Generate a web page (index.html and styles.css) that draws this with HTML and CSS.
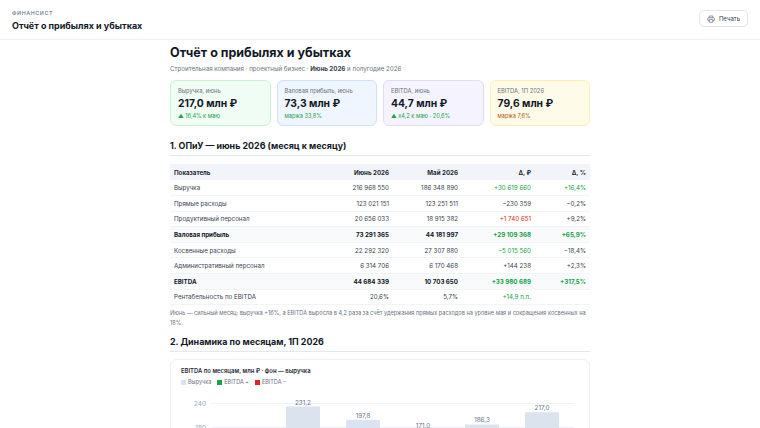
FILE: index.html
```html
<!DOCTYPE html>
<html lang="ru">
<head>
<meta charset="utf-8">
<title>Отчёт о прибылях и убытках</title>
<link rel="stylesheet" href="styles.css">
</head>
<body>
<header class="topbar">
  <div class="brand">
    <div class="brand-kicker">ФИНАНСИСТ</div>
    <div class="brand-title">Отчёт о прибылях и убытках</div>
  </div>
  <button class="print-btn" type="button">
    <svg class="print-icon" viewBox="0 0 16 16" width="8" height="8" aria-hidden="true">
      <path d="M4.5 5.5V2h7v3.5" fill="none" stroke="#6b7280" stroke-width="1.5" stroke-linejoin="round"/>
      <rect x="1.5" y="5.5" width="13" height="6" rx="1.5" fill="none" stroke="#6b7280" stroke-width="1.5"/>
      <rect x="4.5" y="9" width="7" height="5.5" rx="0.5" fill="#fff" stroke="#6b7280" stroke-width="1.5"/>
    </svg>
    <span>Печать</span>
  </button>
</header>

<main class="page">
  <h1 class="title">Отчёт о прибылях и убытках</h1>
  <p class="subtitle">Строительная компания · проектный бизнес · <b>Июнь 2026</b> и полугодие 2026</p>

  <div class="kpis">
    <div class="kpi kpi-green">
      <div class="kpi-label">Выручка, июнь</div>
      <div class="kpi-value">217,0 млн ₽</div>
      <div class="kpi-sub up">▲ 16,4% к маю</div>
    </div>
    <div class="kpi kpi-blue">
      <div class="kpi-label">Валовая прибыль, июнь</div>
      <div class="kpi-value">73,3 млн ₽</div>
      <div class="kpi-sub up">маржа 33,8%</div>
    </div>
    <div class="kpi kpi-violet">
      <div class="kpi-label">EBITDA, июнь</div>
      <div class="kpi-value">44,7 млн ₽</div>
      <div class="kpi-sub up">▲ х4,2 к маю · 20,6%</div>
    </div>
    <div class="kpi kpi-yellow">
      <div class="kpi-label">EBITDA, 1П 2026</div>
      <div class="kpi-value">79,6 млн ₽</div>
      <div class="kpi-sub amber">маржа 7,6%</div>
    </div>
  </div>

  <h2 class="section sec1">1. ОПиУ — июнь 2026 (месяц к месяцу)</h2>
  <table class="pl">
    <colgroup>
      <col class="c1"><col class="c2"><col class="c3"><col class="c4"><col class="c5">
    </colgroup>
    <thead>
      <tr><th>Показатель</th><th class="num">Июнь 2026</th><th class="num">Май 2026</th><th class="num">Δ, ₽</th><th class="num">Δ, %</th></tr>
    </thead>
    <tbody>
      <tr><td>Выручка</td><td class="num">216 968 550</td><td class="num">186 348 890</td><td class="num pos">+30 619 660</td><td class="num pos">+16,4%</td></tr>
      <tr><td>Прямые расходы</td><td class="num">123 021 151</td><td class="num">123 251 511</td><td class="num">−230 359</td><td class="num">−0,2%</td></tr>
      <tr><td>Продуктивный персонал</td><td class="num">20 656 033</td><td class="num">18 915 382</td><td class="num neg">+1 740 651</td><td class="num">+9,2%</td></tr>
      <tr class="total"><td>Валовая прибыль</td><td class="num">73 291 365</td><td class="num">44 181 997</td><td class="num pos">+29 109 368</td><td class="num pos">+65,9%</td></tr>
      <tr><td>Косвенные расходы</td><td class="num">22 292 320</td><td class="num">27 307 880</td><td class="num pos">−5 015 560</td><td class="num">−18,4%</td></tr>
      <tr><td>Административный персонал</td><td class="num">6 314 706</td><td class="num">6 170 468</td><td class="num">+144 238</td><td class="num">+2,3%</td></tr>
      <tr class="total"><td>EBITDA</td><td class="num">44 684 339</td><td class="num">10 703 650</td><td class="num pos">+33 980 689</td><td class="num pos">+317,5%</td></tr>
      <tr><td>Рентабельность по EBITDA</td><td class="num">20,6%</td><td class="num">5,7%</td><td class="num pos">+14,9 п.п.</td><td class="num"></td></tr>
    </tbody>
  </table>
  <p class="note">Июнь — сильный месяц: выручка +16%, а EBITDA выросла в 4,2 раза за счёт удержания прямых расходов на уровне мая и сокращения косвенных на 18%.</p>

  <h2 class="section sec2">2. Динамика по месяцам, 1П 2026</h2>
  <div class="chart-card">
    <div class="chart-title">EBITDA по месяцам, млн ₽ · фон — выручка</div>
    <div class="legend">
      <span class="lg"><i class="sw sw-rev"></i>Выручка</span>
      <span class="lg"><i class="sw sw-pos"></i>EBITDA +</span>
      <span class="lg"><i class="sw sw-neg"></i>EBITDA −</span>
    </div>
    <svg class="chart" viewBox="0 0 420 140" width="420" height="140" aria-label="EBITDA по месяцам">
      <g stroke="#eef1f5" stroke-width="1">
        <line x1="40" y1="15.5" x2="403" y2="15.5"/>
        <line x1="40" y1="39.5" x2="403" y2="39.5"/>
        <line x1="40" y1="63.5" x2="403" y2="63.5"/>
        <line x1="40" y1="87.5" x2="403" y2="87.5"/>
        <line x1="40" y1="111.5" x2="403" y2="111.5"/>
      </g>
      <g fill="#94a3b8" font-size="6.5" text-anchor="end">
        <text x="35" y="17.5">240</text>
        <text x="35" y="41.5">180</text>
        <text x="35" y="65.5">120</text>
        <text x="35" y="89.5">60</text>
        <text x="35" y="113.5">0</text>
      </g>
      <g fill="#dbe3ef">
        <rect x="55" y="50" width="34" height="61"/>
        <rect x="115" y="18.5" width="34" height="92.5"/>
        <rect x="175" y="31.9" width="34" height="79.1"/>
        <rect x="235" y="42.6" width="34" height="68.4"/>
        <rect x="294" y="36.5" width="34" height="74.5"/>
        <rect x="354" y="24.2" width="34" height="86.8"/>
      </g>
      <g fill="#64748b" font-size="6.3" text-anchor="middle">
        <text x="72" y="48">152,4</text>
        <text x="132" y="16.5">231,2</text>
        <text x="192" y="29.5">197,8</text>
        <text x="252" y="40.2">171,0</text>
        <text x="311" y="34.2">186,3</text>
        <text x="371" y="21.9">217,0</text>
      </g>
      <g>
        <rect x="63" y="111" width="18" height="2.5" fill="#dc2626"/>
        <rect x="123" y="103.6" width="18" height="7.4" fill="#16a34a"/>
        <rect x="183" y="107.4" width="18" height="3.6" fill="#16a34a"/>
        <rect x="243" y="109.9" width="18" height="1.1" fill="#16a34a"/>
        <rect x="302" y="106.7" width="18" height="4.3" fill="#16a34a"/>
        <rect x="362" y="93.1" width="18" height="17.9" fill="#16a34a"/>
      </g>
    </svg>
  </div>
</main>
</body>
</html>
```

FILE: styles.css
```css
* { box-sizing: border-box; }
html, body { margin: 0; padding: 0; background: #ffffff; }
body {
  font-family: Inter, "Noto Sans", "Liberation Sans", sans-serif;
  color: #111827;
}

.topbar {
  display: flex;
  align-items: center;
  justify-content: space-between;
  height: 40px;
  padding: 0 12px;
  border-bottom: 1px solid #eceef1;
}
.brand {
  padding-top: 1px;
}
.brand-kicker {
  font-size: 5.3px;
  font-weight: 700;
  letter-spacing: 0.6px;
  color: #8b93a1;
  margin-bottom: 4px;
}
.brand-title {
  font-size: 9px;
  font-weight: 700;
  color: #111827;
}
.print-btn {
  display: flex;
  align-items: center;
  gap: 4px;
  height: 17px;
  margin-top: -2px;
  padding: 0 7px;
  border: 1px solid #e2e5ea;
  border-radius: 5px;
  background: #fff;
  font-family: inherit;
  font-size: 6px;
  color: #374151;
}
.print-icon { display: block; }

.page {
  width: 420px;
  margin: 0 auto;
  padding-top: 4px;
}
.title {
  margin: 0;
  font-size: 12.5px;
  font-weight: 700;
  color: #111827;
  line-height: 18px;
}
.subtitle {
  margin: 2px 0 0;
  font-size: 6.2px;
  color: #6b7280;
  line-height: 9px;
}
.subtitle b { color: #374151; }

.kpis {
  display: grid;
  grid-template-columns: repeat(4, 1fr);
  gap: 6px;
  margin-top: 7px;
}
.kpi {
  height: 46px;
  border: 1px solid;
  border-radius: 6px;
  padding: 6px 7px 0;
}
.kpi-green { background: #f0fdf4; border-color: #c9f2d6; }
.kpi-blue { background: #eff6ff; border-color: #cfe0fb; }
.kpi-violet { background: #f5f3ff; border-color: #e2dcfb; }
.kpi-yellow { background: #fefce8; border-color: #fbeeb0; }
.kpi-label {
  font-size: 5.8px;
  color: #6b7280;
  line-height: 8px;
}
.kpi-value {
  font-size: 10.3px;
  font-weight: 700;
  color: #111827;
  line-height: 15px;
  margin-top: 1px;
}
.kpi-sub {
  font-size: 5.6px;
  line-height: 8px;
  margin-top: 1px;
}
.up { color: #16a34a; }
.amber { color: #b45309; }

.section {
  margin: 0;
  padding-bottom: 3px;
  font-size: 8.9px;
  font-weight: 700;
  color: #111827;
  line-height: 13px;
  border-bottom: 1px solid #e3e8f0;
}
.sec1 { margin-top: 13px; }
.sec2 { margin-top: 7px; }

.pl {
  width: 100%;
  border-collapse: collapse;
  table-layout: fixed;
  margin-top: 8px;
  font-size: 6.2px;
  color: #374151;
}
.pl .c1 { width: 153px; }
.pl .c2 { width: 70px; }
.pl .c3 { width: 69px; }
.pl .c4 { width: 73px; }
.pl .c5 { width: 55px; }
.pl th, .pl td {
  height: 15.6px;
  padding: 0 4px;
  border-bottom: 1px solid #f1f3f6;
  white-space: nowrap;
}
.pl th {
  height: 16px;
  background: #f1f4f8;
  font-weight: 700;
  color: #1f2937;
  text-align: left;
  border-bottom: none;
}
.pl .num { text-align: right; }
.pl th.num { text-align: right; }
.pl tr.total td {
  background: #f8fafc;
  font-weight: 700;
  color: #111827;
}
.pl td.pos { color: #16a34a; }
.pl td.neg { color: #dc2626; }
.pl tr.total td.pos { color: #16a34a; }

.note {
  margin: 3px 0 0;
  font-size: 5.6px;
  line-height: 10px;
  color: #6b7280;
}

.chart-card {
  margin-top: 7px;
  border: 1px solid #eceef1;
  border-radius: 7px;
  padding: 7px 10px 0;
  overflow: hidden;
}
.chart-title {
  font-size: 5.9px;
  font-weight: 600;
  color: #1f2937;
  line-height: 8px;
}
.legend {
  display: flex;
  gap: 6px;
  margin-top: 3px;
  font-size: 5.5px;
  color: #6b7280;
  line-height: 8px;
}
.lg { display: flex; align-items: center; gap: 2px; }
.sw { display: inline-block; width: 5px; height: 5px; }
.sw-rev { background: #dbe3ef; }
.sw-pos { background: #16a34a; }
.sw-neg { background: #dc2626; }
.chart {
  display: block;
  margin: 2px 0 0 -10px;
  font-family: Inter, "Noto Sans", sans-serif;
}
```
